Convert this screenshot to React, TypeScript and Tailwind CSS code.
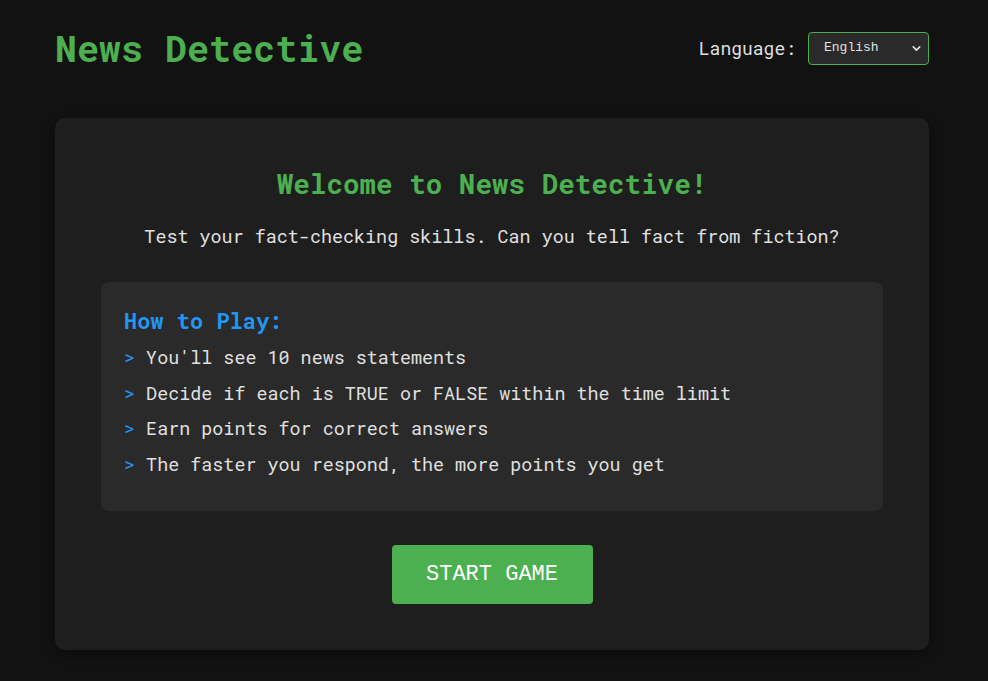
import { ChevronDown } from "lucide-react";

const steps = [
  "You'll see 10 news statements",
  "Decide if each is TRUE or FALSE within the time limit",
  "Earn points for correct answers",
  "The faster you respond, the more points you get",
];

const mono = "font-['Roboto_Mono','DejaVu_Sans_Mono',monospace]";

const App = () => {
  return (
    <div className={`min-h-[681px] bg-[#121212] text-[#e0e0e0] ${mono}`}>
      <div className="pl-[55px] pr-[59px] pt-[26px]">
        <header className="flex items-center justify-between h-[44px]">
          <h1 className="text-[36.7px] leading-[44px] font-bold text-[#4caf50]">
            News Detective
          </h1>
          <div className="flex items-center gap-3">
            <span className="text-[18px]">Language:</span>
            <div className="relative">
              <select className="appearance-none w-[121px] h-[33px] pl-[15px] bg-[#2a2a2a] border border-[#4caf50] rounded-[4px] text-[13px] text-[#e0e0e0] font-['Liberation_Mono',monospace] outline-none">
                <option>English</option>
              </select>
              <ChevronDown
                className="absolute right-[6px] top-[10px] w-[13px] h-[13px] text-[#e0e0e0] pointer-events-none"
                strokeWidth={3}
              />
            </div>
          </div>
        </header>

        <main className="mt-[48px] bg-[#1e1e1e] rounded-[10px] shadow-[0_4px_12px_rgba(0,0,0,0.4)] px-[46px] pt-[48px] pb-[46px] flex flex-col items-center">
          <h2 className="text-[27.6px] leading-[34px] font-bold text-[#4caf50]">
            Welcome to News Detective!
          </h2>
          <p className="mt-[23px] text-[18.4px] leading-[26px]">
            Test your fact-checking skills. Can you tell fact from fiction?
          </p>

          <div className="mt-[33px] w-full bg-[#2a2a2a] rounded-[8px] pl-[23px] pr-[23px] pt-[25px] pb-[29px]">
            <h3 className="text-[22px] leading-[28px] font-bold text-[#2196f3]">
              How to Play:
            </h3>
            <ul className="mt-[5px]">
              {steps.map((s) => (
                <li key={s} className="text-[18.4px] leading-[35.5px]">
                  <span className="text-[#2196f3]">&gt;</span> {s}
                </li>
              ))}
            </ul>
          </div>

          <button className="mt-[34px] w-[201px] h-[59px] bg-[#4caf50] rounded-[4px] text-white text-[22px] font-['Liberation_Mono',monospace]">
            START GAME
          </button>
        </main>
      </div>
    </div>
  );
};

export default App;
